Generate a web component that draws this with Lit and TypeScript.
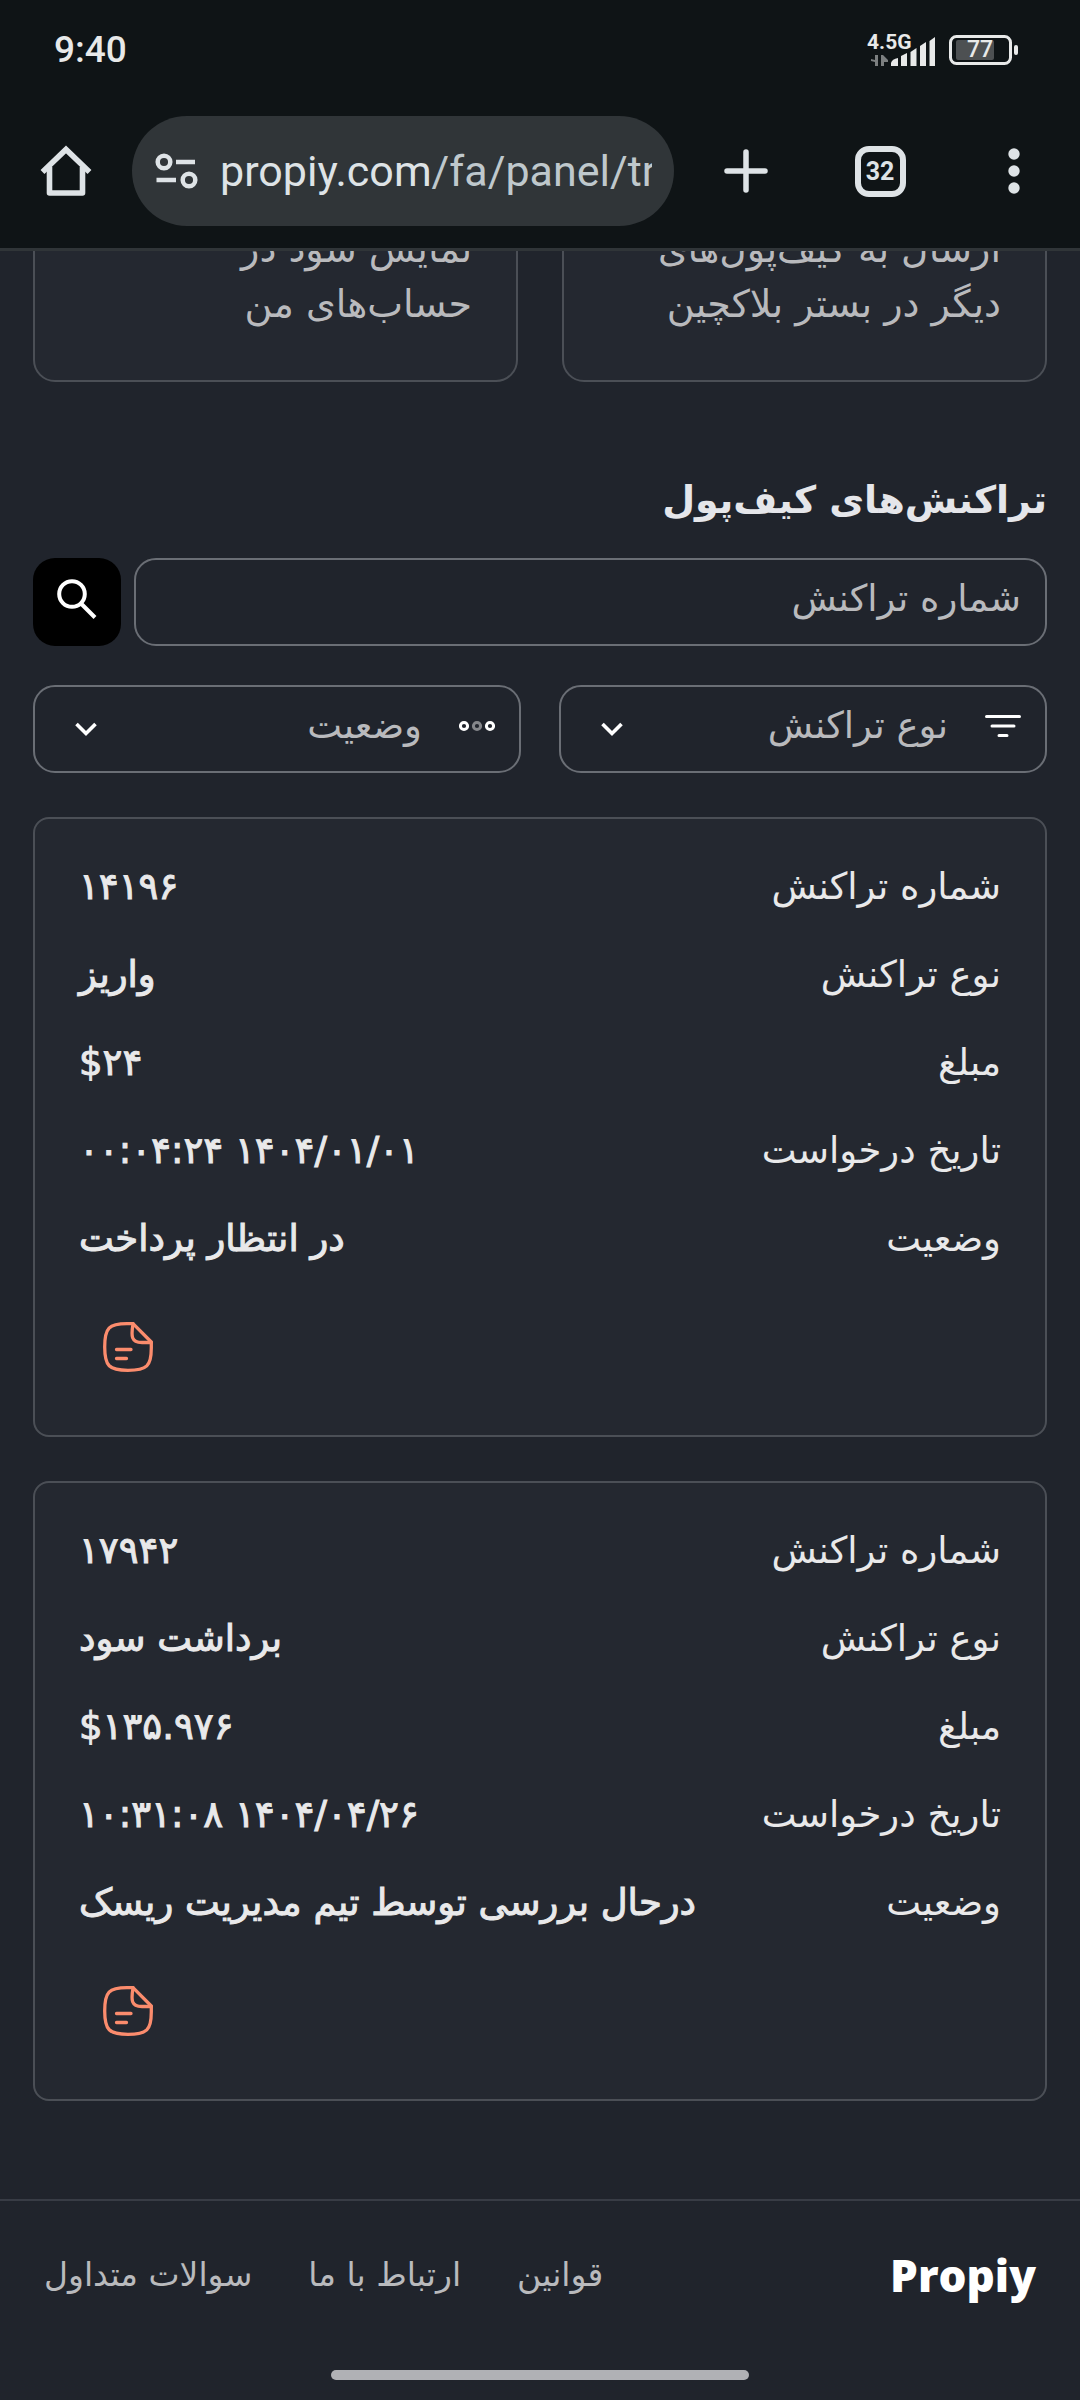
import { LitElement, html, css, svg } from "lit";
import { customElement, property } from "lit/decorators.js";

interface Field {
  label: string;
  value: string;
}

const transactions: Field[][] = [
  [
    { label: "شماره تراکنش", value: "۱۴۱۹۶" },
    { label: "نوع تراکنش", value: "واریز" },
    { label: "مبلغ", value: "$۲۴" },
    { label: "تاریخ درخواست", value: "۱۴۰۴/۰۱/۰۱ ۰۰:۰۴:۲۴" },
    { label: "وضعیت", value: "در انتظار پرداخت" },
  ],
  [
    { label: "شماره تراکنش", value: "۱۷۹۴۲" },
    { label: "نوع تراکنش", value: "برداشت سود" },
    { label: "مبلغ", value: "$۱۳۵.۹۷۶" },
    { label: "تاریخ درخواست", value: "۱۴۰۴/۰۴/۲۶ ۱۰:۳۱:۰۸" },
    { label: "وضعیت", value: "درحال بررسی توسط تیم مدیریت ریسک" },
  ],
];

@customElement("status-bar")
export class StatusBar extends LitElement {
  static styles = css`
    :host {
      display: flex;
      align-items: center;
      justify-content: space-between;
      height: 100px;
      padding: 0 61px 0 54px;
      color: #e8e9e9;
      font-family: Roboto, "Liberation Sans", sans-serif;
    }
    .clock {
      font-size: 37px;
      font-weight: 500;
      line-height: 44px;
    }
    .status {
      display: flex;
      align-items: center;
      gap: 12px;
    }
    .network {
      position: relative;
      width: 70px;
      height: 36px;
    }
    .network-type {
      position: absolute;
      top: 0;
      left: 0;
      font-size: 21px;
      font-weight: 700;
      line-height: 20px;
    }
    .battery {
      display: grid;
      place-items: center;
      width: 70px;
      height: 30px;
    }
    .battery-shell {
      grid-area: 1 / 1;
    }
    .battery-level {
      grid-area: 1 / 1;
      padding-right: 8px;
      font-size: 23px;
      font-weight: 500;
      line-height: 30px;
    }
    svg {
      display: block;
    }
  `;

  render() {
    return html`
      <span class="clock">9:40</span>
      <span class="status">
        <span class="network">
          <svg width="70" height="36" viewBox="0 0 70 36">
            <g fill="#7c7f80">
              <path d="M11 23V34H8V30L4 29V27L8 28V23Z" />
              <path d="M14 34V23H16L21 28V30H17V34Z" />
            </g>
            <g fill="#e8e9e9">
              <path d="M24 34V31Q25 27 31 26V34Z" />
              <path d="M34 34V24L40 21V34Z" />
              <path d="M43.500 34V20L49.500 16V34Z" />
              <path d="M53 34V14L59 10V34Z" />
              <path d="M62.500 34V9L68 5V34Z" />
            </g>
          </svg>
          <span class="network-type">4.5G</span>
        </span>
        <span class="battery">
          <svg class="battery-shell" width="70" height="30" viewBox="0 0 70 30">
            <rect x="1.500" y="1.500" width="60" height="27" rx="6" fill="none" stroke="#e8e9e9" stroke-width="3" />
            <rect x="7" y="5" width="38" height="20" rx="2" fill="#4d5052" />
            <rect x="65" y="10" width="4" height="10" rx="2" fill="#e8e9e9" />
          </svg>
          <span class="battery-level">77</span>
        </span>
      </span>
    `;
  }
}

@customElement("browser-toolbar")
export class BrowserToolbar extends LitElement {
  static styles = css`
    :host {
      display: flex;
      align-items: center;
      padding: 16px 34px 22px 32px;
      border-bottom: 3px solid #303538;
      color: #dee3e6;
      font-family: Roboto, "Liberation Sans", sans-serif;
    }
    button {
      display: grid;
      place-items: center;
      flex: none;
      margin: 0;
      padding: 0;
      border: 0;
      background: none;
      color: inherit;
      font: inherit;
    }
    .home {
      width: 68px;
      height: 68px;
    }
    .address {
      display: flex;
      flex: 1;
      align-items: center;
      gap: 22px;
      min-width: 0;
      height: 110px;
      margin: 0 40px 0 32px;
      padding: 0 22px;
      border-radius: 55px;
      background: #303538;
      text-align: left;
    }
    .address svg {
      flex: none;
    }
    .url {
      flex: 1;
      min-width: 0;
      overflow: hidden;
      white-space: nowrap;
      font-size: 43px;
      line-height: 64px;
    }
    .path {
      color: #bfc8cc;
    }
    .actions {
      display: flex;
      gap: 70px;
    }
    .action {
      width: 64px;
      height: 64px;
    }
    .count {
      display: grid;
      place-items: center;
      width: 39px;
      height: 39px;
      border: 6px solid #dee3e6;
      border-radius: 14px;
      font-size: 25px;
      font-weight: 700;
      line-height: 39px;
    }
    svg {
      display: block;
    }
  `;

  render() {
    return html`
      <button class="home" aria-label="Home">
        <svg width="52" height="52" viewBox="0 0 52 52" fill="none" stroke="currentColor" stroke-width="5.600" stroke-linejoin="round">
          <path d="M2.500 27 26 4.500 49.500 27" stroke-linejoin="miter" />
          <path d="M9.500 22V48H42.500V22" />
        </svg>
      </button>
      <button class="address">
        <svg width="44" height="38" viewBox="0 0 44 38" fill="none" stroke="currentColor" stroke-width="4.500">
          <circle cx="10" cy="10" r="6.300" />
          <path d="M22 10H41M2.500 28H22" />
          <circle cx="35" cy="28" r="6.300" />
        </svg>
        <span class="url">propiy.com<span class="path">/fa/panel/tr</span></span>
      </button>
      <div class="actions">
        <button class="action" aria-label="New tab">
          <svg width="44" height="44" viewBox="0 0 44 44" stroke="currentColor" stroke-width="5.500" stroke-linecap="round">
            <path d="M3 22H41M22 3V41" />
          </svg>
        </button>
        <button class="action" aria-label="Tabs"><span class="count">32</span></button>
        <button class="action" aria-label="Menu">
          <svg width="12" height="48" viewBox="0 0 12 48" fill="currentColor">
            <circle cx="6" cy="7" r="5.700" />
            <circle cx="6" cy="24" r="5.700" />
            <circle cx="6" cy="41" r="5.700" />
          </svg>
        </button>
      </div>
    `;
  }
}

@customElement("transaction-card")
export class TransactionCard extends LitElement {
  @property({ attribute: false }) fields: Field[] = [];

  static styles = css`
    :host {
      display: block;
      padding: 44px 44px 63px;
      border: 2px solid #4b4f56;
      border-radius: 16px;
      background: #242830;
      color: #e9e9ea;
    }
    .fields {
      display: flex;
      flex-direction: column;
      gap: 40px;
      margin: 0;
    }
    .field {
      display: flex;
      align-items: center;
      justify-content: space-between;
      line-height: 48px;
    }
    .label {
      font-size: 37px;
    }
    .value {
      margin: 0;
      font-size: 37px;
      white-space: nowrap;
      -webkit-text-stroke: 1px currentColor;
    }
    .details {
      display: block;
      width: 50px;
      height: 50px;
      margin: 59px auto 0 24px;
      padding: 0;
      border: 0;
      background: none;
      color: #fb8c6d;
    }
    svg {
      display: block;
    }
  `;

  render() {
    return html`
      <dl class="fields">
        ${this.fields.map(
          (field) => html`
            <div class="field">
              <dt class="label">${field.label}</dt>
              <dd class="value">${field.value}</dd>
            </div>
          `,
        )}
      </dl>
      <button class="details" aria-label="جزئیات">
        <svg width="50" height="50" viewBox="0 0 50 50" fill="none" stroke="currentColor" stroke-width="3.300" stroke-linecap="round" stroke-linejoin="round">
          <path d="M30 1.700H24C6 1.700 1.700 6 1.700 25S6 48.300 25 48.300 48.300 44 48.300 26V20Z" />
          <path d="M30 1.700C28 14 28 20.500 39 20.500H48.300" />
          <path d="M13.500 27.500H28M13.500 36.500H23.500" />
        </svg>
      </button>
    `;
  }
}

const filterIcon = svg`
  <path d="M1.500 2.500H34.500M7 12H29M14 21.500H22" stroke="#fff" stroke-width="3" stroke-linecap="round" />
`;

const dotsIcon = svg`
  <g fill="none" stroke="#fff" stroke-width="3">
    <circle cx="5" cy="12" r="3.600" />
    <circle cx="18" cy="12" r="3.600" stroke="#85878b" />
    <circle cx="31" cy="12" r="3.600" />
  </g>
`;

@customElement("app-root")
export class AppRoot extends LitElement {
  static styles = css`
    :host {
      display: flex;
      flex-direction: column;
      min-height: 100vh;
      background: #20242c;
      color: #b9babd;
      font-family: "DejaVu Sans", sans-serif;
    }
    .chrome {
      background: #0f1416;
    }
    .content {
      display: flex;
      flex-direction: column;
      padding: 0 33px;
    }
    .shortcuts {
      display: grid;
      grid-template-columns: 1fr 1fr;
      align-content: end;
      gap: 44px;
      height: 131px;
      overflow: hidden;
    }
    .shortcut {
      padding: 44px 44px 48px;
      border: 2px solid #4b4f56;
      border-radius: 22px;
      background: #242830;
      font-size: 38px;
      line-height: 55px;
    }
    .shortcut-text {
      margin: 0;
    }
    .title {
      margin: 90px 0 30px;
      color: #e5e6ea;
      font-size: 38px;
      font-weight: 700;
      line-height: 56px;
    }
    .search {
      display: flex;
      gap: 13px;
    }
    .search-input {
      flex: 1;
      box-sizing: border-box;
      min-width: 0;
      height: 88px;
      padding: 0 24px 8px;
      border: 2px solid #6a6e75;
      border-radius: 22px;
      background: transparent;
      color: #e9e9ea;
      font-family: inherit;
      font-size: 37px;
    }
    .search-input::placeholder {
      color: #b9babd;
      opacity: 1;
    }
    .search-button {
      display: grid;
      place-items: center;
      width: 88px;
      height: 88px;
      padding: 0;
      border: 0;
      border-radius: 22px;
      background: #000;
    }
    .filters {
      display: grid;
      grid-template-columns: 1fr 1fr;
      gap: 38px;
      margin: 39px 0 44px;
    }
    .filter {
      display: flex;
      align-items: center;
      box-sizing: border-box;
      height: 88px;
      padding: 0 24px 0 39px;
      border: 2px solid #6a6e75;
      border-radius: 22px;
    }
    .icon {
      margin-bottom: 6px;
    }
    .select {
      flex: 1;
      min-width: 0;
      height: 84px;
      margin: 0;
      padding: 0 37px 8px 0;
      border: 0;
      background: transparent;
      color: #b9babd;
      font-family: inherit;
      font-size: 37px;
      appearance: none;
    }
    .transactions {
      display: flex;
      flex-direction: column;
      gap: 44px;
    }
    .footer {
      display: flex;
      align-items: center;
      justify-content: space-between;
      margin-top: 98px;
      padding: 42px 44px;
      border-top: 2px solid #383c45;
    }
    .brand {
      color: #fff;
      font-family: "Open Sans", Inter, sans-serif;
      font-size: 44px;
      font-weight: 800;
      line-height: 64px;
      text-decoration: none;
    }
    .links {
      display: flex;
      gap: 56px;
    }
    .link {
      color: #b9babd;
      font-size: 33px;
      line-height: 56px;
      text-decoration: none;
    }
    .gesture {
      width: 418px;
      height: 10px;
      margin: auto auto 20px;
      border-radius: 5px;
      background: #b0b1b5;
    }
    svg {
      display: block;
      flex: none;
    }
  `;

  private filter(name: string, label: string, icon: unknown) {
    return html`
      <div class="filter">
        <svg class="icon" width="36" height="24" viewBox="0 0 36 24">${icon}</svg>
        <select class="select" id=${name} aria-label=${label}>
          <option>${label}</option>
        </select>
        <svg width="24" height="18" viewBox="0 0 24 18" fill="none" stroke="#fff" stroke-width="3.600">
          <path d="M2.500 4 12 13.500 21.500 4" />
        </svg>
      </div>
    `;
  }

  render() {
    return html`
      <header class="chrome">
        <status-bar></status-bar>
        <browser-toolbar></browser-toolbar>
      </header>
      <main class="content" dir="rtl" lang="fa">
        <section class="shortcuts">
          <div class="shortcut"><p class="shortcut-text">ارسال به کیف‌پول‌های<br />دیگر در بستر بلاکچین</p></div>
          <div class="shortcut"><p class="shortcut-text">نمایش سود در<br />حساب‌های من</p></div>
        </section>
        <h2 class="title">تراکنش‌های کیف‌پول</h2>
        <form class="search">
          <input class="search-input" type="text" placeholder="شماره تراکنش" aria-label="شماره تراکنش" />
          <button class="search-button" type="button" aria-label="جستجو">
            <svg width="40" height="46" viewBox="0 0 40 46" fill="none" stroke="#fff" stroke-width="4">
              <circle cx="15" cy="15" r="12.800" />
              <path d="M24 24.500 38 38.500" />
            </svg>
          </button>
        </form>
        <div class="filters">
          ${this.filter("type", "نوع تراکنش", filterIcon)} ${this.filter("state", "وضعیت", dotsIcon)}
        </div>
        <section class="transactions">
          ${transactions.map((fields) => html`<transaction-card .fields=${fields}></transaction-card>`)}
        </section>
      </main>
      <footer class="footer" dir="rtl" lang="fa">
        <a class="brand" href="#home">Propiy</a>
        <nav class="links">
          <a class="link" href="#rules">قوانین</a>
          <a class="link" href="#contact">ارتباط با ما</a>
          <a class="link" href="#faq">سوالات متداول</a>
        </nav>
      </footer>
      <div class="gesture"></div>
    `;
  }
}
